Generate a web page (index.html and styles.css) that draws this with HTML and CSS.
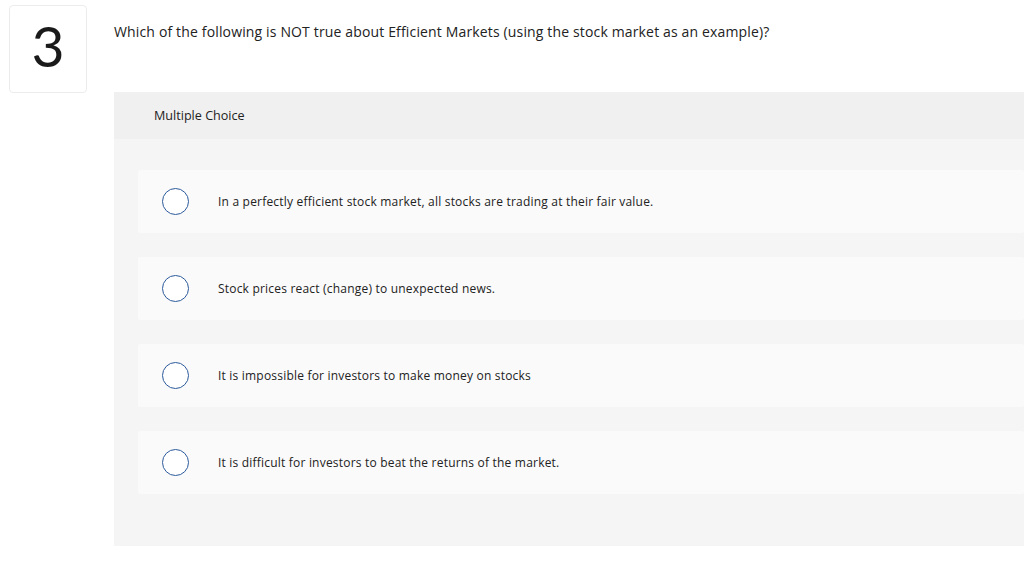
FILE: index.html
```html
<!DOCTYPE html>
<html>
<head>
<meta charset="utf-8">
<link rel="stylesheet" href="styles.css">
</head>
<body>
<div class="question">
  <div class="num">3</div>
  <div class="main">
    <p class="prompt">Which of the following is NOT true about Efficient Markets (using the stock market as an example)?</p>
    <div class="panel">
      <div class="panel-head">Multiple Choice</div>
      <div class="panel-body">
        <div class="option"><span class="radio"></span><span class="label">In a perfectly efficient stock market, all stocks are trading at their fair value.</span></div>
        <div class="option"><span class="radio"></span><span class="label">Stock prices react (change) to unexpected news.</span></div>
        <div class="option"><span class="radio"></span><span class="label">It is impossible for investors to make money on stocks</span></div>
        <div class="option"><span class="radio"></span><span class="label">It is difficult for investors to beat the returns of the market.</span></div>
      </div>
    </div>
  </div>
</div>
</body>
</html>
```

FILE: styles.css
```css
html, body {
  margin: 0;
  padding: 0;
  background: #ffffff;
  font-family: "Open Sans", "Liberation Sans", sans-serif;
  color: #222;
  overflow: hidden;
}
.question {
  display: flex;
  padding: 5px 0 0 9px;
}
.num {
  flex: none;
  width: 76px;
  height: 78px;
  padding-bottom: 8px;
  box-sizing: content-box;
  border: 1px solid #ececec;
  border-radius: 4px;
  display: flex;
  align-items: center;
  justify-content: center;
  font-family: "Lato", sans-serif;
  font-weight: 400;
  font-size: 57px;
  line-height: 1;
  color: #1a1a1a;
}
.main {
  flex: 1;
  margin-left: 27px;
}
.prompt {
  margin: 16px 0 0 0;
  font-size: 14px;
  letter-spacing: 0.15px;
  line-height: 22px;
  color: #222;
}
.panel {
  margin-top: 49px;
  background: #f5f5f5;
  padding-bottom: 52px;
}
.panel-head {
  background: #f0f0f0;
  height: 47px;
  padding-left: 40px;
  display: flex;
  align-items: center;
  font-size: 12.6px;
  color: #222;
}
.panel-body {
  padding: 31px 0 0 24px;
  display: flex;
  flex-direction: column;
  gap: 24px;
}
.option {
  height: 63px;
  background: #fafafa;
  border-radius: 2px;
  display: flex;
  align-items: center;
  padding-left: 24px;
}
.radio {
  flex: none;
  width: 25px;
  height: 25px;
  border: 1px solid #2c5a9c;
  border-radius: 50%;
  background: #fff;
}
.label {
  margin-left: 29px;
  font-size: 12px;
  letter-spacing: 0.2px;
  color: #222;
}
```
